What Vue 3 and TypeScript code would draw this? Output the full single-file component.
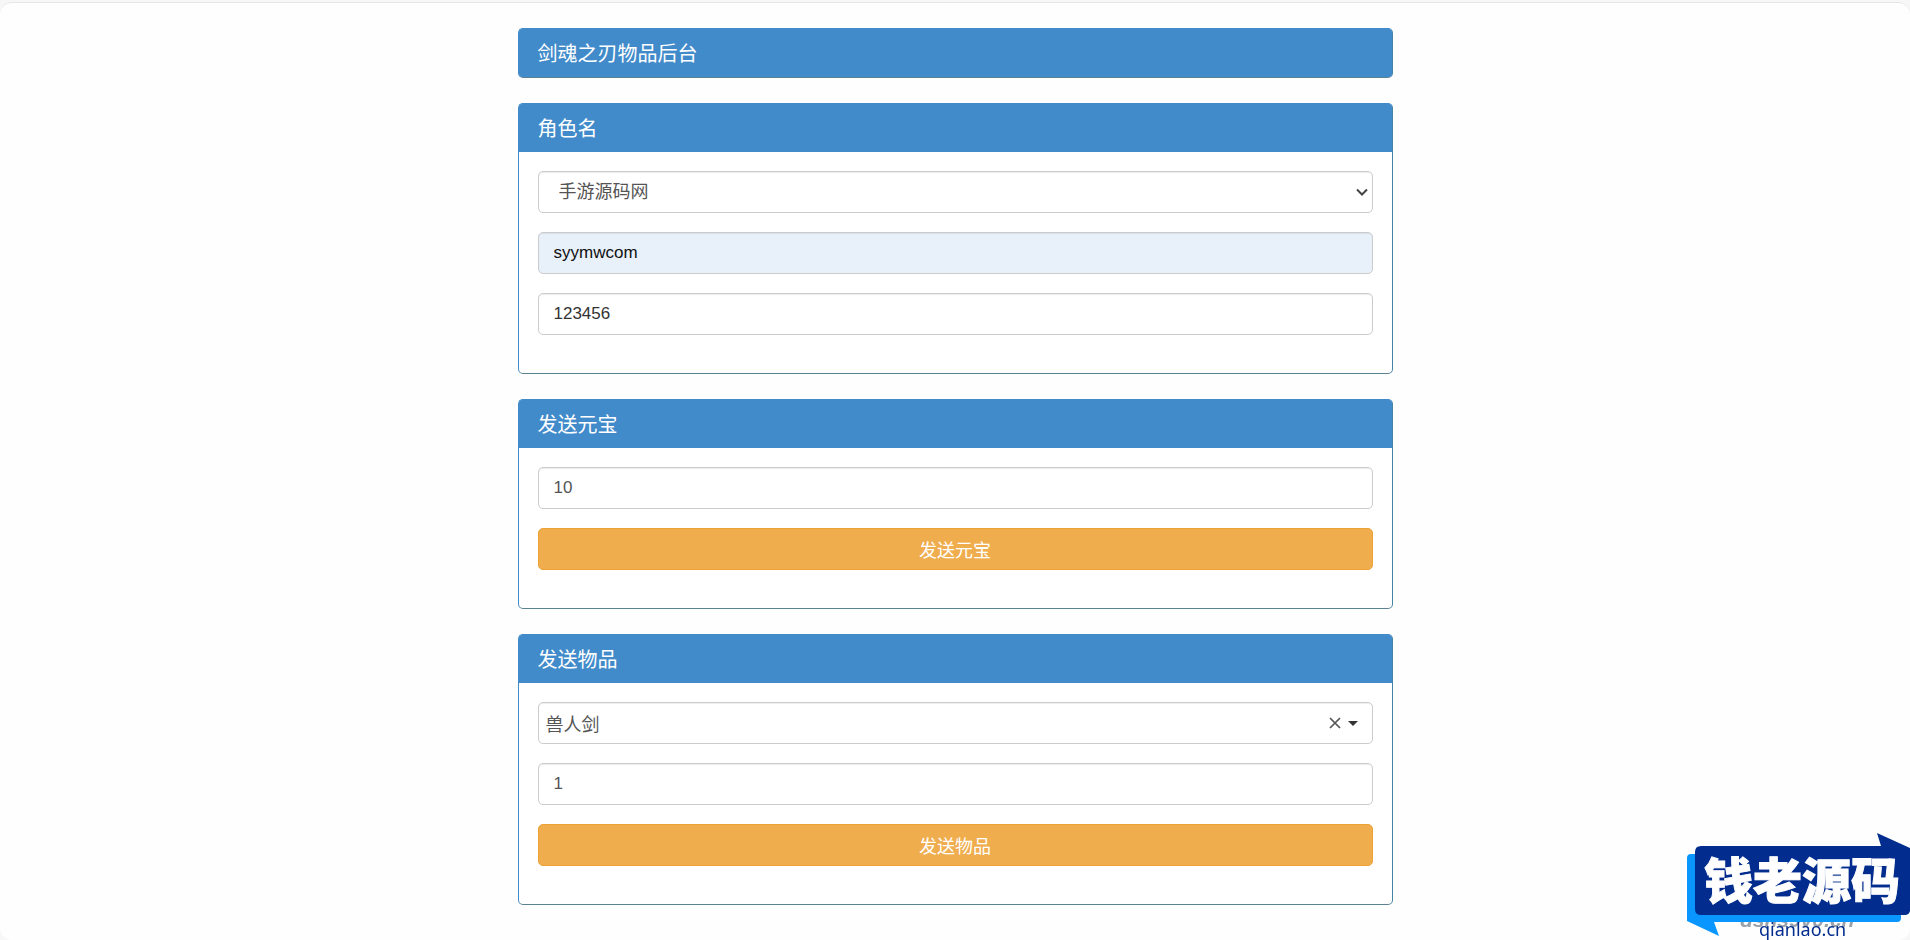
<script setup lang="ts">
import { ref } from 'vue'

const servers = ['手游源码网']
const server = ref(servers[0])
const account = ref('syymwcom')
const password = ref('123456')
const ingots = ref('10')
const item = ref('兽人剑')
const quantity = ref('1')
</script>

<template>
  <div class="page">
    <main class="container">
      <section class="panel">
        <h1 class="heading">剑魂之刃物品后台</h1>
      </section>

      <section class="panel">
        <h2 class="heading">角色名</h2>
        <div class="body">
          <div class="select-wrap">
            <select v-model="server" class="control select" aria-label="角色名">
              <option v-for="s in servers" :key="s" :value="s">{{ s }}</option>
            </select>
            <svg class="chevron" viewBox="0 0 12 8" aria-hidden="true">
              <path d="M1 1.500 6 6.500l5-5" fill="none" stroke="#444" stroke-width="2" />
            </svg>
          </div>
          <input v-model="account" class="control filled" type="text" aria-label="账号" />
          <input v-model="password" class="control dark" type="text" aria-label="密码" />
        </div>
      </section>

      <section class="panel">
        <h2 class="heading">发送元宝</h2>
        <form class="body" @submit.prevent>
          <input v-model="ingots" class="control" type="text" aria-label="元宝数量" />
          <button class="send" type="submit">发送元宝</button>
        </form>
      </section>

      <section class="panel">
        <h2 class="heading">发送物品</h2>
        <form class="body" @submit.prevent>
          <div class="control combo">
            <input v-model="item" class="combo-input" type="text" aria-label="物品" />
            <button class="combo-button" type="button" aria-label="清除" @click="item = ''">
              <svg width="12" height="12" viewBox="0 0 12 12" aria-hidden="true">
                <path d="M1 1l10 10M11 1 1 11" fill="none" stroke="#555" stroke-width="1.700" />
              </svg>
            </button>
            <button class="combo-button" type="button" aria-label="展开">
              <svg width="10" height="5" viewBox="0 0 10 5" aria-hidden="true">
                <path d="M0 0h10L5 5z" fill="#333" />
              </svg>
            </button>
          </div>
          <input v-model="quantity" class="control" type="text" aria-label="物品数量" />
          <button class="send" type="submit">发送物品</button>
        </form>
      </section>
    </main>

    <svg class="logo" viewBox="0 0 224 110" role="img" aria-label="钱老源码 qianlao.cn">
      <text class="ghost" x="54" y="97">dsns9v0.cn</text>
      <path d="M5 24H211q4 0 4 4V88q0 4-4 4H28L33 106 1 91V28q0-4 4-4z" fill="#0a96ff" />
      <path d="M15 16H195L191 3l33 15V81q-1 4-5 4H15q-6 0-6-6V22q0-6 6-6z" fill="#022d8e" />
      <text class="brand" x="18" y="69">钱老源码</text>
      <text class="domain" x="73" y="106">qianlao.cn</text>
    </svg>
  </div>
</template>

<style>
body {
  background: #f7f7f7;
}
</style>

<style scoped>
.page {
  box-sizing: border-box;
  min-height: calc(100vh - 2px);
  margin-top: 2px;
  padding: 25px 20px 35px;
  border-top: 1px solid #e6e6e6;
  border-radius: 12px;
  background: #fefefe;
  font-family: "Liberation Sans", "Noto Sans CJK SC", sans-serif;
}

.container {
  display: flex;
  flex-direction: column;
  gap: 25px;
  max-width: 875px;
  margin: 0 auto;
}

.panel {
  border: 1px solid #428bca;
  border-color: #428bca #4682a6 #5b8291 #428bca;
  border-radius: 5px;
  background: #fff;
}

.heading {
  margin: 0;
  padding: 13px 19px 11px;
  background: #428bca;
  border-radius: 3px 3px 0 0;
  color: #fff;
  font-size: 20px;
  font-weight: 400;
  line-height: 24px;
}

.heading:only-child {
  border-radius: 3px;
}

.body {
  display: flex;
  flex-direction: column;
  gap: 19px;
  padding: 19px 19px 38px;
}

.control {
  box-sizing: border-box;
  width: 100%;
  height: 42px;
  padding: 0 15px;
  border: 1px solid #ccc;
  border-radius: 5px;
  background: #fff;
  box-shadow: inset 0 1px 1px rgba(0, 0, 0, 0.075);
  color: #555;
  font-family: inherit;
  font-size: 17px;
}

.select-wrap {
  display: grid;
  align-items: center;
}

.select-wrap > * {
  grid-area: 1 / 1;
}

.select {
  appearance: none;
  padding: 0 20px;
  font-size: 18px;
}

.chevron {
  justify-self: end;
  width: 12px;
  height: 8px;
  margin-right: 5px;
  pointer-events: none;
}

.filled {
  background: #e8f0fa;
  color: #111;
}

.dark {
  color: #333;
}

.combo {
  display: flex;
  align-items: center;
  gap: 7px;
  padding: 0 14px 0 7px;
}

.combo-input {
  flex: 1;
  min-width: 0;
  padding: 0;
  border: 0;
  background: none;
  outline: 0;
  color: inherit;
  font-family: inherit;
  font-size: 18px;
}

.combo-button {
  display: flex;
  padding: 0;
  border: 0;
  background: none;
}

.send {
  height: 42px;
  padding: 0;
  border: 1px solid #eea236;
  border-radius: 5px;
  background: #f0ad4e;
  color: #fff;
  font-family: inherit;
  font-size: 18px;
}

.logo {
  position: fixed;
  right: 0;
  bottom: 0;
  width: 224px;
  height: 110px;
}

.brand {
  fill: #fff;
  stroke: #fff;
  stroke-width: 1px;
  font-family: "Noto Sans CJK SC", sans-serif;
  font-size: 49px;
  font-weight: 900;
}

.ghost {
  fill: #9aa3ab;
  font-size: 21px;
  font-style: italic;
  font-weight: 700;
}

.domain {
  fill: #022d8e;
  font-family: "Noto Sans", sans-serif;
  font-size: 18px;
}
</style>
